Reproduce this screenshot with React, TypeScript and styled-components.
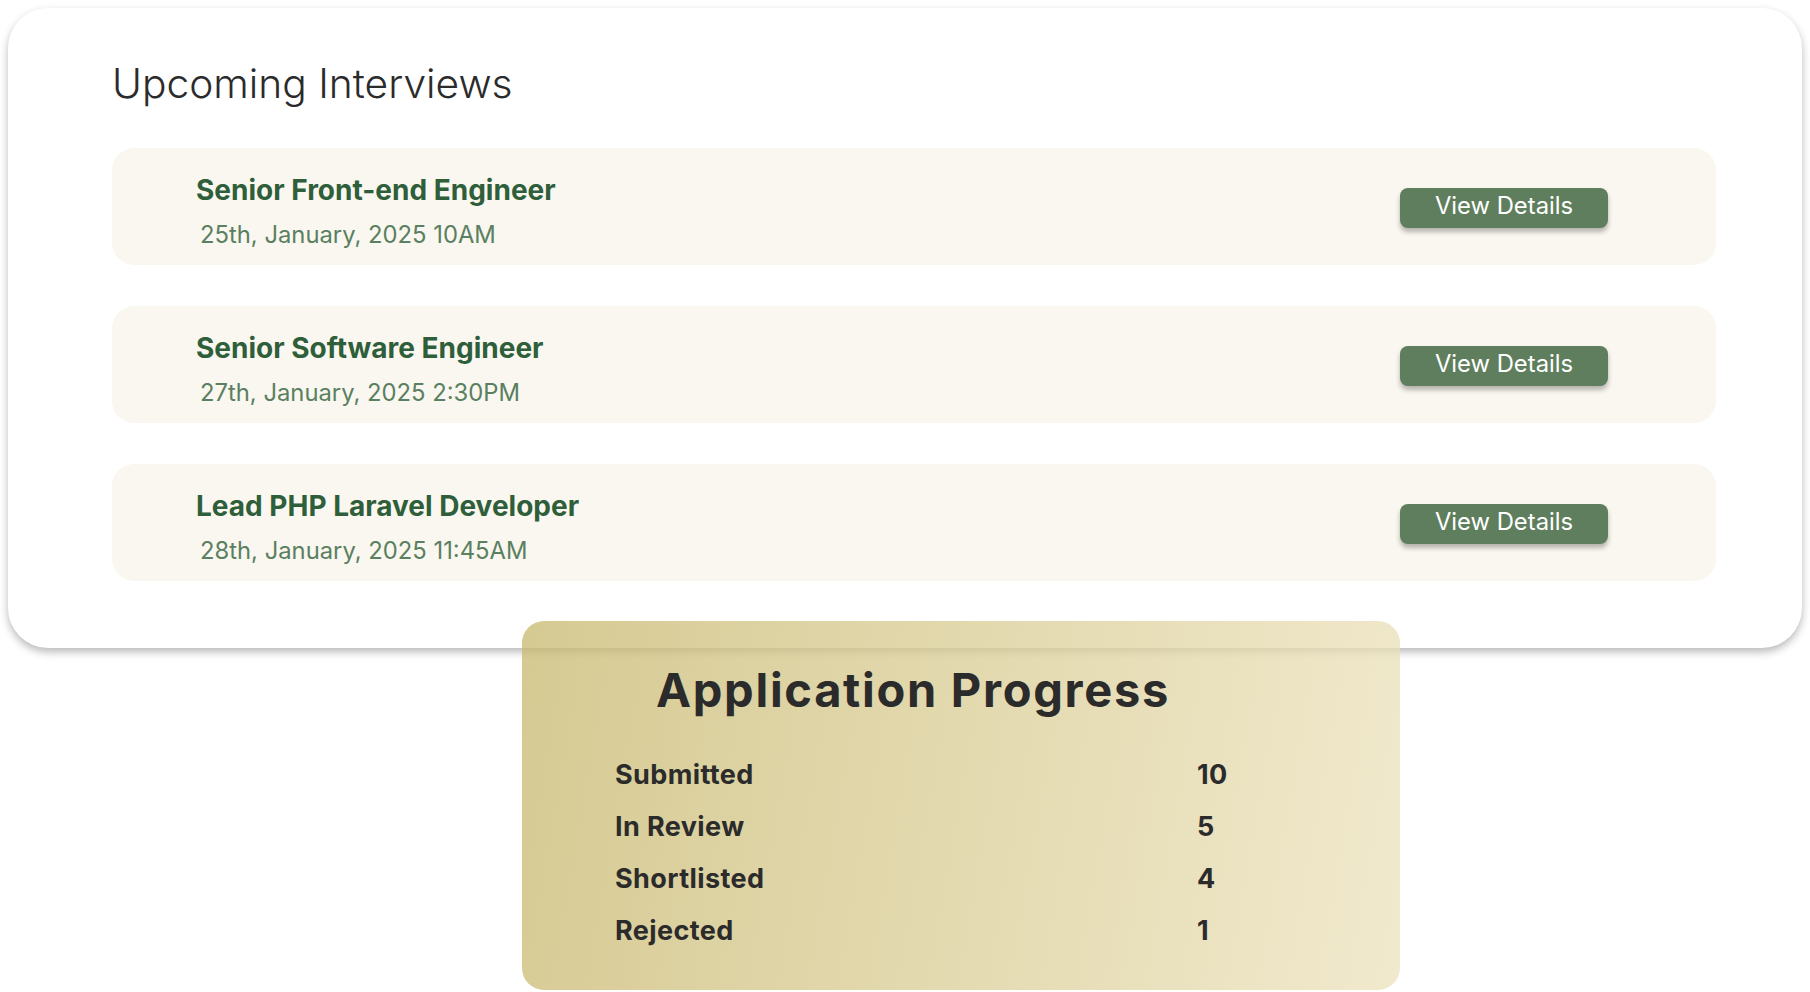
import React from "react";
import styled, { createGlobalStyle } from "styled-components";

const GlobalStyle = createGlobalStyle`
  html, body { margin: 0; padding: 0; background: #ffffff; overflow: hidden; }
  body { font-family: "Inter", "Liberation Sans", sans-serif; }
  * { box-sizing: border-box; }
`;

const Page = styled.div`
  padding: 8px 8px 0 8px;
  width: 1810px;
  height: 992px;
`;

const InterviewsCard = styled.section`
  position: relative;
  z-index: 0;
  background: #ffffff;
  border-radius: 40px;
  box-shadow: 0 4px 8px rgba(0, 0, 0, 0.28);
  padding: 52px 86px 67px 104px;
  display: flex;
  flex-direction: column;
`;

const SectionTitle = styled.h2`
  margin: 0 0 40px 0;
  font-family: "Inter", "Liberation Sans", sans-serif;
  font-weight: 300;
  font-size: 40.7px;
  line-height: 48px;
  color: #2b2b2b;
`;

const List = styled.div`
  display: flex;
  flex-direction: column;
  gap: 41px;
`;

const Row = styled.div`
  height: 117px;
  background: #f9f7ef;
  border-radius: 22px;
  display: flex;
  align-items: flex-start;
  justify-content: space-between;
  padding: 26px 108px 0 84px;
`;

const Info = styled.div`
  display: flex;
  flex-direction: column;
  gap: 14px;
`;

const JobTitle = styled.div`
  font-weight: 700;
  font-size: 28px;
  line-height: 33px;
  color: #2f5e3a;
`;

const JobDate = styled.div`
  font-weight: 400;
  font-size: 23.8px;
  line-height: 28px;
  color: #5b7f61;
  padding-left: 4px;
`;

const DetailsButton = styled.button`
  margin-top: 14px;
  width: 208px;
  height: 40px;
  border: none;
  border-radius: 8px;
  background: #5e7e5d;
  color: #ffffff;
  font-family: "Inter", "Liberation Sans", sans-serif;
  font-size: 23.8px;
  font-weight: 400;
  line-height: 36px;
  padding: 0 0 4px 0;
  box-shadow: 0 4px 5px rgba(0, 0, 0, 0.28);
  cursor: pointer;
`;

const ProgressCard = styled.section`
  position: relative;
  z-index: 1;
  margin: -27px 0 0 514px;
  width: 878px;
  height: 369px;
  border-radius: 22px;
  background: linear-gradient(100deg, rgba(200, 184, 110, 0.75) 0%, rgba(236, 226, 188, 0.75) 100%);
  padding: 42px 0 0 0;
`;

const ProgressTitle = styled.h2`
  margin: 0 0 32px 134px;
  font-family: "Inter", "Liberation Sans", sans-serif;
  font-weight: 700;
  font-size: 47px;
  line-height: 54px;
  color: #2b2b2b;
  letter-spacing: 1.7px;
`;

const StatGrid = styled.div`
  display: grid;
  grid-template-columns: 582px auto;
  padding-left: 93px;
`;

const StatCell = styled.div`
  font-weight: 700;
  font-size: 27px;
  line-height: 52px;
  letter-spacing: 0.4px;
  color: #2b2b2b;
`;

const interviews = [
  { title: "Senior Front-end Engineer", date: "25th, January, 2025 10AM" },
  { title: "Senior Software Engineer", date: "27th, January, 2025 2:30PM" },
  { title: "Lead PHP Laravel Developer", date: "28th, January, 2025 11:45AM" },
];

const stats = [
  { label: "Submitted", value: 10 },
  { label: "In Review", value: 5 },
  { label: "Shortlisted", value: 4 },
  { label: "Rejected", value: 1 },
];

export default function App() {
  return (
    <>
      <GlobalStyle />
      <Page>
        <InterviewsCard>
          <SectionTitle>Upcoming Interviews</SectionTitle>
          <List>
            {interviews.map((it) => (
              <Row key={it.title}>
                <Info>
                  <JobTitle>{it.title}</JobTitle>
                  <JobDate>{it.date}</JobDate>
                </Info>
                <DetailsButton>View Details</DetailsButton>
              </Row>
            ))}
          </List>
        </InterviewsCard>
        <ProgressCard>
          <ProgressTitle>Application Progress</ProgressTitle>
          <StatGrid>
            {stats.map((s) => (
              <React.Fragment key={s.label}>
                <StatCell>{s.label}</StatCell>
                <StatCell>{s.value}</StatCell>
              </React.Fragment>
            ))}
          </StatGrid>
        </ProgressCard>
      </Page>
    </>
  );
}
